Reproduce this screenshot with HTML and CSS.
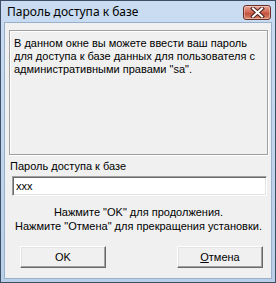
FILE: index.html
```html
<!DOCTYPE html>
<html lang="ru">
<head>
    <meta charset="UTF-8">
    <title>Пароль доступа к базе</title>
    <link rel="stylesheet" href="styles.css">
</head>
<body>
    <div class="window">
        <div class="titlebar">
            <span class="title">Пароль доступа к базе</span>
            <div class="close-btn">
                <svg width="15" height="11" viewBox="0 0 15 11">
                    <path d="M3 1.5 L12 9.5 M12 1.5 L3 9.5" stroke="#4a2018" stroke-width="4" stroke-linecap="square" fill="none"/>
                    <path d="M3 1.5 L12 9.5 M12 1.5 L3 9.5" stroke="#ffffff" stroke-width="2" stroke-linecap="square" fill="none"/>
                </svg>
            </div>
        </div>

        <div class="client">
            <div class="info-panel">
                В данном окне вы можете ввести ваш пароль для доступа к базе данных для пользователя с административными правами "sa".
            </div>

            <div class="field-label">Пароль доступа к базе</div>
            <div class="text-input">xxx</div>

            <div class="hint">
                <p>Нажмите "OK" для продолжения.</p>
                <p>Нажмите "Отмена" для прекращения установки.</p>
            </div>

            <div class="buttons">
                <button class="btn">OK</button>
                <button class="btn"><u>О</u>тмена</button>
            </div>
        </div>
    </div>
</body>
</html>
```

FILE: styles.css
```css
* {
    margin: 0;
    padding: 0;
    box-sizing: border-box;
}

body {
    background-color: #ffffff;
    font-family: "Liberation Sans", Arial, sans-serif;
    font-size: 11px;
    color: #000;
}

.window {
    width: 276px;
    height: 283px;
    border: 1px solid #3d4f66;
    background: linear-gradient(to bottom, #c9dcf1, #b9cfe8);
    padding: 0 3px 3px 3px;
    display: flex;
    flex-direction: column;
}

.titlebar {
    height: 21px;
    display: flex;
    align-items: center;
    justify-content: space-between;
    padding: 0 1px 0 3px;
}

.title {
    font-family: "Noto Sans", "Open Sans", sans-serif;
    font-size: 12px;
    color: #000;
}

.close-btn {
    width: 28px;
    height: 15px;
    margin-top: 2px;
    border: 1px solid #6b2e26;
    border-radius: 3px;
    background: linear-gradient(to bottom, #e8a99c, #d0624f 50%, #c04a36 51%, #d98a6f);
    display: flex;
    align-items: center;
    justify-content: center;
    box-shadow: inset 0 0 0 1px rgba(255,255,255,0.35);
}

.client {
    flex: 1;
    background-color: #f0f0f0;
    border: 1px solid #98b0cc;
    padding: 7px 3px 0 4px;
}

.info-panel {
    height: 125px;
    border: 1px solid #a0a0a0;
    box-shadow: inset 1px 1px 0 #ffffff, 1px 1px 0 #ffffff;
    padding: 6px 4px;
    line-height: 13px;
}

.field-label {
    margin-top: 5px;
    margin-left: 1px;
    line-height: 13px;
}

.text-input {
    margin-top: 3px;
    margin-left: 3px;
    width: 255px;
    height: 20px;
    background-color: #fff;
    border: 1px solid;
    border-color: #a0a0a0 #ffffff #ffffff #a0a0a0;
    box-shadow: inset 1px 1px 0 #696969, inset -1px -1px 0 #e3e3e3;
    padding: 3px 3px;
    line-height: 13px;
}

.hint {
    margin-top: 9px;
    text-align: center;
    line-height: 14px;
}

.buttons {
    margin-top: 13px;
    display: flex;
    justify-content: space-between;
    padding: 0 5px 0 11px;
}

.btn {
    width: 86px;
    height: 22px;
    background-color: #f0f0f0;
    border: 1px solid;
    border-color: #ffffff #696969 #696969 #ffffff;
    box-shadow: inset -1px -1px 0 #a0a0a0, inset 1px 1px 0 #e3e3e3;
    font-family: "Liberation Sans", Arial, sans-serif;
    font-size: 11px;
    color: #000;
}
```
